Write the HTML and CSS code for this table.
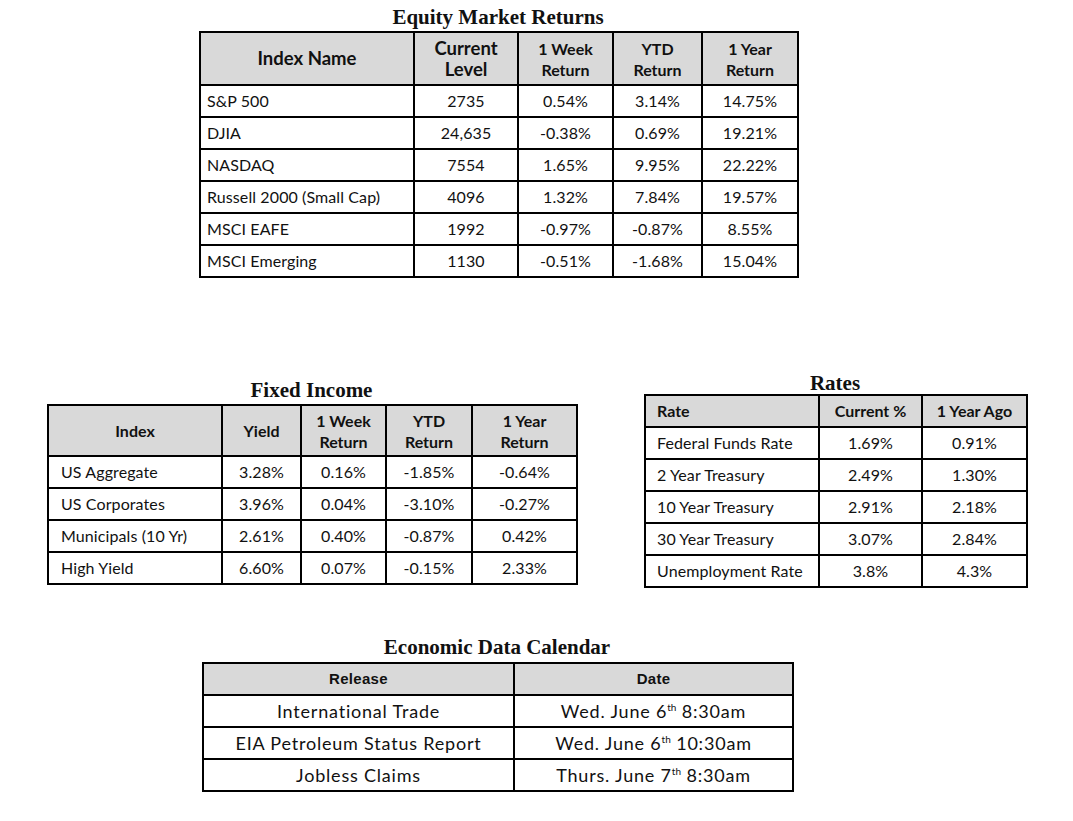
FILE: index.html
```html
<!DOCTYPE html>
<html>
<head>
<meta charset="utf-8">
<link rel="stylesheet" href="styles.css">
</head>
<body>
<div class="page">
  <section class="block equity">
    <h2 class="title">Equity Market Returns</h2>
    <table class="grid eq">
      <colgroup>
        <col class="e1"><col class="e2"><col class="e3"><col class="e4"><col class="e5">
      </colgroup>
      <thead>
        <tr class="head2">
          <th class="big">Index Name</th><th class="big">Current<br>Level</th><th>1 Week<br>Return</th><th>YTD<br>Return</th><th>1 Year<br>Return</th>
        </tr>
      </thead>
      <tbody>
        <tr><td class="name">S&amp;P 500</td><td>2735</td><td>0.54%</td><td>3.14%</td><td>14.75%</td></tr>
        <tr><td class="name">DJIA</td><td>24,635</td><td>-0.38%</td><td>0.69%</td><td>19.21%</td></tr>
        <tr><td class="name">NASDAQ</td><td>7554</td><td>1.65%</td><td>9.95%</td><td>22.22%</td></tr>
        <tr><td class="name">Russell 2000 (Small Cap)</td><td>4096</td><td>1.32%</td><td>7.84%</td><td>19.57%</td></tr>
        <tr><td class="name">MSCI EAFE</td><td>1992</td><td>-0.97%</td><td>-0.87%</td><td>8.55%</td></tr>
        <tr><td class="name">MSCI Emerging</td><td>1130</td><td>-0.51%</td><td>-1.68%</td><td>15.04%</td></tr>
      </tbody>
    </table>
  </section>

  <div class="middle">
    <section class="block fixed">
      <h2 class="title">Fixed Income</h2>
      <table class="grid fi">
        <colgroup>
          <col class="f1"><col class="f2"><col class="f3"><col class="f4"><col class="f5">
        </colgroup>
        <thead>
          <tr class="head2">
            <th>Index</th><th>Yield</th><th>1 Week<br>Return</th><th>YTD<br>Return</th><th>1 Year<br>Return</th>
          </tr>
        </thead>
        <tbody>
          <tr><td class="name">US Aggregate</td><td>3.28%</td><td>0.16%</td><td>-1.85%</td><td>-0.64%</td></tr>
          <tr><td class="name">US Corporates</td><td>3.96%</td><td>0.04%</td><td>-3.10%</td><td>-0.27%</td></tr>
          <tr><td class="name">Municipals (10 Yr)</td><td>2.61%</td><td>0.40%</td><td>-0.87%</td><td>0.42%</td></tr>
          <tr><td class="name">High Yield</td><td>6.60%</td><td>0.07%</td><td>-0.15%</td><td>2.33%</td></tr>
        </tbody>
      </table>
    </section>

    <section class="block rates">
      <h2 class="title">Rates</h2>
      <table class="grid rt">
        <colgroup>
          <col class="r1"><col class="r2"><col class="r3">
        </colgroup>
        <thead>
          <tr class="head1">
            <th class="name">Rate</th><th>Current %</th><th>1 Year Ago</th>
          </tr>
        </thead>
        <tbody>
          <tr><td class="name">Federal Funds Rate</td><td>1.69%</td><td>0.91%</td></tr>
          <tr><td class="name">2 Year Treasury</td><td>2.49%</td><td>1.30%</td></tr>
          <tr><td class="name">10 Year Treasury</td><td>2.91%</td><td>2.18%</td></tr>
          <tr><td class="name">30 Year Treasury</td><td>3.07%</td><td>2.84%</td></tr>
          <tr><td class="name">Unemployment Rate</td><td>3.8%</td><td>4.3%</td></tr>
        </tbody>
      </table>
    </section>
  </div>

  <section class="block calendar">
    <h2 class="title">Economic Data Calendar</h2>
    <table class="grid cal">
      <colgroup>
        <col class="c1"><col class="c2">
      </colgroup>
      <thead>
        <tr class="head1">
          <th>Release</th><th>Date</th>
        </tr>
      </thead>
      <tbody>
        <tr><td>International Trade</td><td>Wed. June 6<sup>th</sup> 8:30am</td></tr>
        <tr><td>EIA Petroleum Status Report</td><td>Wed. June 6<sup>th</sup> 10:30am</td></tr>
        <tr><td>Jobless Claims</td><td>Thurs. June 7<sup>th</sup> 8:30am</td></tr>
      </tbody>
    </table>
  </section>
</div>
</body>
</html>
```

FILE: styles.css
```css
html, body {
  margin: 0;
  padding: 0;
  background: #ffffff;
}

.page {
  width: 1073px;
  height: 821px;
  padding-top: 6px;
  box-sizing: border-box;
  display: flex;
  flex-direction: column;
  color: #111111;
  font-family: Lato, "Open Sans", "Liberation Sans", sans-serif;
}

.title {
  margin: 0 0 3px 0;
  font-family: "Liberation Serif", "DejaVu Serif", serif;
  font-weight: bold;
  font-size: 21px;
  line-height: 22px;
  text-align: center;
  color: #111111;
}

.grid {
  border-collapse: collapse;
  table-layout: fixed;
  font-size: 16px;
}

.grid th,
.grid td {
  border: 2px solid #000000;
  padding: 0 6px;
  text-align: center;
  vertical-align: middle;
  white-space: nowrap;
}

.grid th {
  background: #d9d9d9;
  font-weight: bold;
  font-size: 16px;
}

.grid td {
  height: 30px;
  line-height: 18px;
  letter-spacing: 0.1px;
}

.grid .name {
  text-align: left;
}

.head2 th {
  height: 51px;
  line-height: 21px;
}

.head1 th {
  height: 30px;
  line-height: 18px;
}

/* Equity */
.equity {
  margin-left: 199px;
  width: 598px;
}
.eq { width: 598px; }
.eq th.big { font-size: 18.5px; }
.e1 { width: 214px; }
.e2 { width: 104px; }
.e3 { width: 95px; }
.e4 { width: 89px; }
.e5 { width: 96px; }

/* Middle row */
.middle {
  display: flex;
  align-items: flex-start;
  margin-top: 94px;
}

.fixed {
  margin-left: 47px;
  width: 529px;
  margin-top: 7px;
}
.fixed .title { margin-bottom: 3px; }
.fi { width: 529px; }
.fi td, .fi th { padding: 0 12px; }
.fi .head2 th { height: 49px; }
.f1 { width: 174px; }
.f2 { width: 79px; }
.f3 { width: 85px; }
.f4 { width: 86px; }
.f5 { width: 105px; }

.rates {
  margin-left: 68px;
  width: 382px;
}
.rates .title { margin-bottom: 0; }
.rt { width: 382px; }
.rt td, .rt th { padding: 0 11px; }
.r1 { width: 174px; }
.r2 { width: 103px; }
.r3 { width: 105px; }

/* Calendar */
.calendar {
  margin-left: 202px;
  width: 590px;
  margin-top: 48px;
}
.calendar .title { margin-bottom: 4px; }
.cal { width: 590px; }
.cal th {
  font-family: "Liberation Sans", Arial, sans-serif;
  font-size: 15px;
  letter-spacing: 0.3px;
}
.cal td {
  font-size: 18px;
  letter-spacing: 0.8px;
}
.c1 { width: 311px; }
.c2 { width: 279px; }

sup {
  font-size: 10px;
  line-height: 0;
  vertical-align: 7px;
  letter-spacing: 0;
}
```
